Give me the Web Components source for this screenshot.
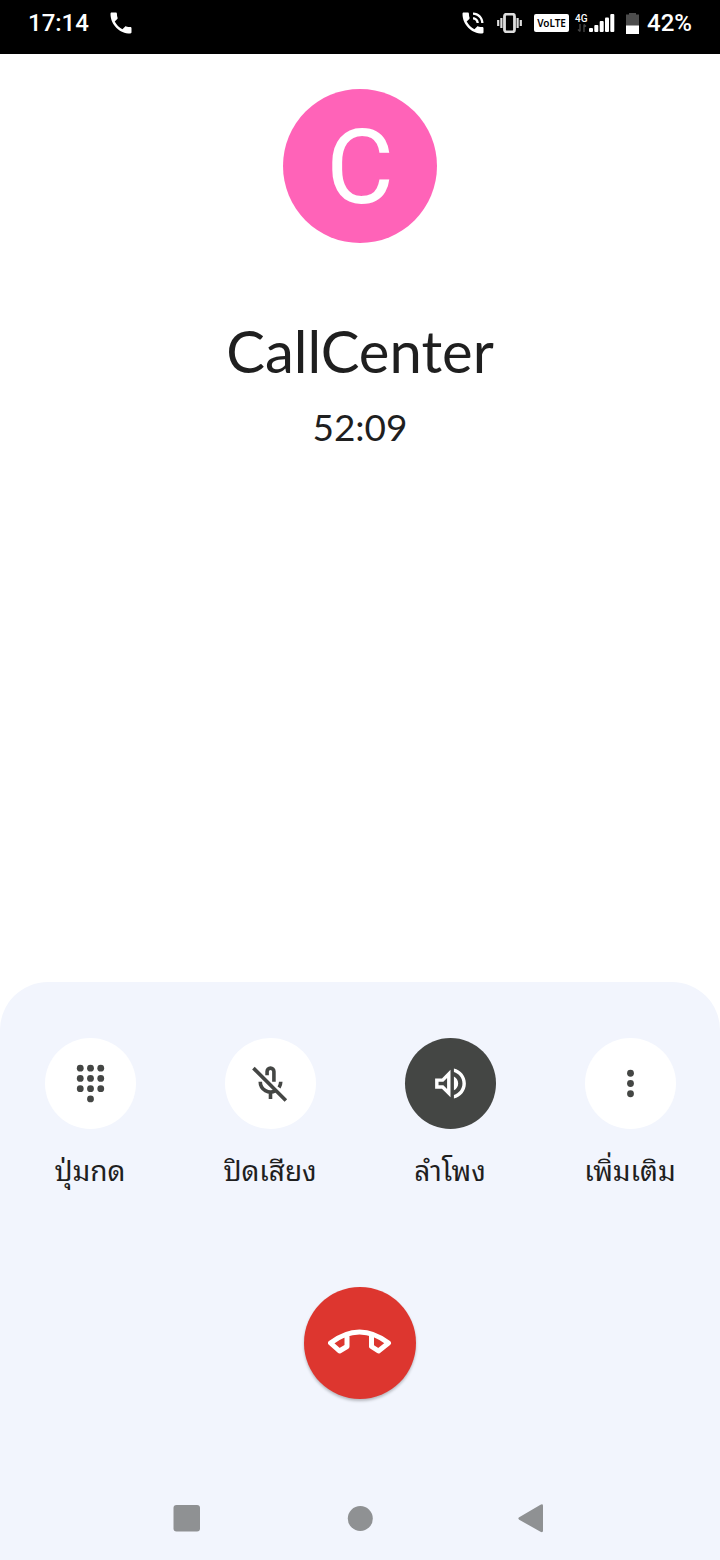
<!DOCTYPE html>
<html lang="th">
<head>
<meta charset="utf-8">
<meta name="viewport" content="width=device-width, initial-scale=1">
<title>CallCenter</title>
<style>
  html, body { margin: 0; background: #fff; }
  body { font-family: Roboto, "Noto Sans", sans-serif; color: #1f1f1f; }
</style>
</head>
<body>
<call-screen></call-screen>
<script>
const define = (name, html, setup) => {
  const template = document.createElement('template');
  template.innerHTML = html;
  customElements.define(name, class extends HTMLElement {
    constructor() {
      super();
      this.attachShadow({ mode: 'open' }).append(template.content.cloneNode(true));
    }
    connectedCallback() { if (setup) setup(this, this.shadowRoot); }
  });
};

define('status-bar', `
<style>
  :host { display: flex; justify-content: space-between; align-items: center; box-sizing: border-box;
    height: 54px; padding: 0 28px 8px; background: #000; color: #fff; font: 500 24px/30px Roboto, sans-serif; }
  div { display: flex; align-items: center; }
  svg { display: block; flex: none; }
  .left { gap: 18px; }
  .vibrate { margin: 0 12px 0 10px; }
  .volte { background: #fff; color: #000; border-radius: 2px; width: 35px; text-align: center;
    font: 600 10px/18px "Noto Sans", sans-serif; }
  .net { margin-left: 6px; align-items: flex-start; }
  .net .type { display: block; }
  .net span { display: block; font: 500 10px/10px Roboto, sans-serif; }
  .bat { margin: 0 8px 0 11px; }
</style>
<div class="left"><span>17:14</span>
  <svg width="28" height="28" viewBox="0 0 24 24" fill="#fff"><path d="M6.62 10.79c1.44 2.83 3.76 5.14 6.59 6.59l2.2-2.2c.27-.27.67-.36 1.02-.24 1.12.37 2.33.57 3.57.57.55 0 1 .45 1 1V20c0 .55-.45 1-1 1-9.39 0-17-7.61-17-17 0-.55.45-1 1-1h3.5c.55 0 1 .45 1 1 0 1.25.2 2.45.57 3.57.11.35.03.74-.25 1.02l-2.2 2.2z"/></svg>
</div>
<div>
  <svg width="28" height="28" viewBox="0 0 24 24" fill="#fff"><path d="M20 15.5c-1.25 0-2.45-.2-3.57-.57-.35-.11-.74-.03-1.02.24l-2.2 2.2c-2.83-1.44-5.15-3.75-6.59-6.59l2.2-2.21c.28-.26.36-.65.25-1C8.7 6.45 8.5 5.25 8.5 4c0-.55-.45-1-1-1H4c-.55 0-1 .45-1 1 0 9.39 7.61 17 17 17 .55 0 1-.45 1-1v-3.5c0-.55-.45-1-1-1zM19 12h2c0-4.97-4.03-9-9-9v2c3.87 0 7 3.13 7 7zm-4 0h2c0-2.76-2.24-5-5-5v2c1.66 0 3 1.34 3 3z"/></svg>
  <svg class="vibrate" width="25" height="20" viewBox="0 0 25 20"><rect x="7.5" y="1.2" width="10" height="17.6" rx="2" fill="none" stroke="#ddd" stroke-width="2.8"/><path d="M1.2 7v6M4.4 5v10M20.6 5v10M23.8 7v6" stroke="#ddd" stroke-width="2.2"/></svg>
  <span class="volte">VoLTE</span>
  <div class="net">
    <div class="type"><span>4G</span><svg width="14" height="8" viewBox="0 0 14 8" fill="none" stroke="#444"><path d="M5 0v7.5M3 5.5l2 2M9 8V.5M9 .5l2 2" stroke-width="1.4"/></svg></div>
    <svg width="26" height="18" viewBox="0 0 26 18" fill="#fff"><rect y="14" width="4" height="4" rx="1"/><rect x="5.3" y="11" width="4" height="7" rx="1"/><rect x="10.7" y="7" width="4" height="11" rx="1"/><rect x="16" y="3.5" width="4" height="14.5" rx="1"/><rect x="21.3" width="4" height="18" rx="1"/></svg>
  </div>
  <svg class="bat" width="13" height="21" viewBox="0 0 13 21"><path d="M3 0h7v1.5h3V13H0V1.5h3z" fill="#4c4c4c"/><path d="M0 12.5h13V21H0z" fill="#fff"/></svg>
  <span>42%</span>
</div>`);

define('contact-card', `
<style>
  :host { display: flex; flex-direction: column; align-items: center; padding: 35px 16px; text-align: center; }
  .avatar { width: 154px; height: 154px; border-radius: 50%; background: #ff63b8; color: #fff;
    font: 400 104px/158px Roboto, sans-serif; }
  h1 { margin: 72px 0 0; font: 400 58px/72px Lato, sans-serif; }
  p { margin: 18px 0 0; font: 400 37px/44px Lato, sans-serif; }
</style>
<div class="avatar" aria-hidden="true">C</div>
<h1><slot name="name"></slot></h1>
<p><slot name="time"></slot></p>`);

define('call-action', `
<style>
  :host { display: block; flex: 1; min-width: 0; }
  button { display: flex; flex-direction: column; align-items: center; gap: 22px; width: 100%; padding: 0; border: 0;
    background: none; color: #1f1f1f; cursor: pointer;
    font: 400 28px/36px "Noto Sans Thai Looped", Loma, Waree, Garuda, Norasi, "Noto Sans Thai", "Noto Sans", sans-serif; }
  .disc { display: grid; place-items: center; width: 91px; height: 91px; border-radius: 50%; background: #fff; color: #444644; }
  :host([active]) .disc { background: #444644; color: #fff; }
  svg { display: block; width: 41px; height: 41px; fill: currentColor; }
  .label { height: 36px; white-space: nowrap; }
</style>
<button type="button"><span class="disc"><svg viewBox="0 0 24 24" aria-hidden="true"></svg></span><span class="label"><slot></slot></span></button>`,
(host, root) => {
  const dots = list => list.map(([x, y]) => `<circle cx="${x}" cy="${y}" r="2"/>`).join('');
  const icons = {
    keypad: dots([[6,3],[12,3],[18,3],[6,9],[12,9],[18,9],[6,15],[12,15],[18,15],[12,21]]),
    more: dots([[12,4],[12,12],[12,20]].map(([x, y]) => [x, 12 + (y - 12) * .75])),
    mute: '<path d="M10 7.2V5a2 2 0 0 1 4 0v6M6 11a6 6 0 0 0 9 5.2M18 11a6 6 0 0 1-1 3.3M12 17v4" fill="none" stroke="currentColor" stroke-width="2.1"/><path d="M2 3l19 19" stroke="currentColor" stroke-width="2.1"/>',
    speaker: '<path d="M3 9v6h4l5 5V4L7 9H3zm7-.17v6.34L7.83 13H5v-2h2.83L10 8.83zM16.5 12c0-1.77-1.02-3.29-2.5-4.03v8.05c1.48-.73 2.5-2.25 2.5-4.02zM14 3.23v2.06c2.89.86 5 3.54 5 6.71s-2.11 5.85-5 6.71v2.06c4.01-.91 7-4.49 7-8.77s-2.99-7.86-7-8.77z"/>'
  };
  root.querySelector('svg').innerHTML = icons[host.getAttribute('icon')];
  if (host.hasAttribute('active')) root.querySelector('button').setAttribute('aria-pressed', 'true');
});

define('end-call', `
<style>
  :host { display: block; }
  button { display: grid; place-items: center; width: 112px; height: 112px; padding: 0; border: 0; border-radius: 50%;
    background: #dd362f; box-shadow: 0 2px 3px rgba(0,0,0,.25); cursor: pointer; }
  svg { display: block; }
</style>
<button type="button" aria-label="วางสาย"><svg width="64" height="30" viewBox="0 0 64 30" fill="none" stroke="#fff" stroke-width="5" stroke-linejoin="round"><path d="M2.5 15Q31.5-7 60.5 15L50.5 23 43.5 18.5V8M19 8V18.5L11.5 23 2.5 15Q31.5-7 60.5 15"/></svg></button>`);

define('nav-bar', `
<style>
  :host { display: flex; justify-content: center; gap: 134px; height: 84px; align-items: center; }
  button { display: grid; place-items: center; width: 38px; height: 48px; padding: 0; border: 0; background: none; cursor: pointer; }
  svg { display: block; fill: #8f9193; }
</style>
<button type="button" aria-label="แอปล่าสุด"><svg width="30" height="28" viewBox="0 0 30 28"><rect x=".5" y="1" width="26.5" height="26.5" rx="3"/></svg></button>
<button type="button" aria-label="หน้าแรก"><svg width="26" height="26" viewBox="0 0 26 26"><circle cx="13.3" cy="13.5" r="12.5"/></svg></button>
<button type="button" aria-label="กลับ"><svg width="28" height="30" viewBox="0 0 28 30"><path d="M1.2 14.3 22.500 1.700q2.500-1 2.500 1v25.100q0 2-2.500 1L1.200 16.700q-1.700-1.200 0-2.400z"/></svg></button>`);

define('call-screen', `
<style>
  :host { display: flex; flex-direction: column; min-height: 100vh; }
  main { flex: 1; }
  footer { background: #f2f5fd; border-radius: 48px 48px 0 0; padding-top: 56px; }
  .actions { display: flex; }
  end-call { width: 112px; margin: 100px auto 77px; }
</style>
<status-bar></status-bar>
<main><contact-card><span slot="name">CallCenter</span><span slot="time">52:09</span></contact-card></main>
<footer>
  <div class="actions">
    <call-action icon="keypad">ปุ่มกด</call-action>
    <call-action icon="mute">ปิดเสียง</call-action>
    <call-action icon="speaker" active>ลำโพง</call-action>
    <call-action icon="more">เพิ่มเติม</call-action>
  </div>
  <end-call></end-call>
  <nav-bar></nav-bar>
</footer>`);
</script>
</body>
</html>
